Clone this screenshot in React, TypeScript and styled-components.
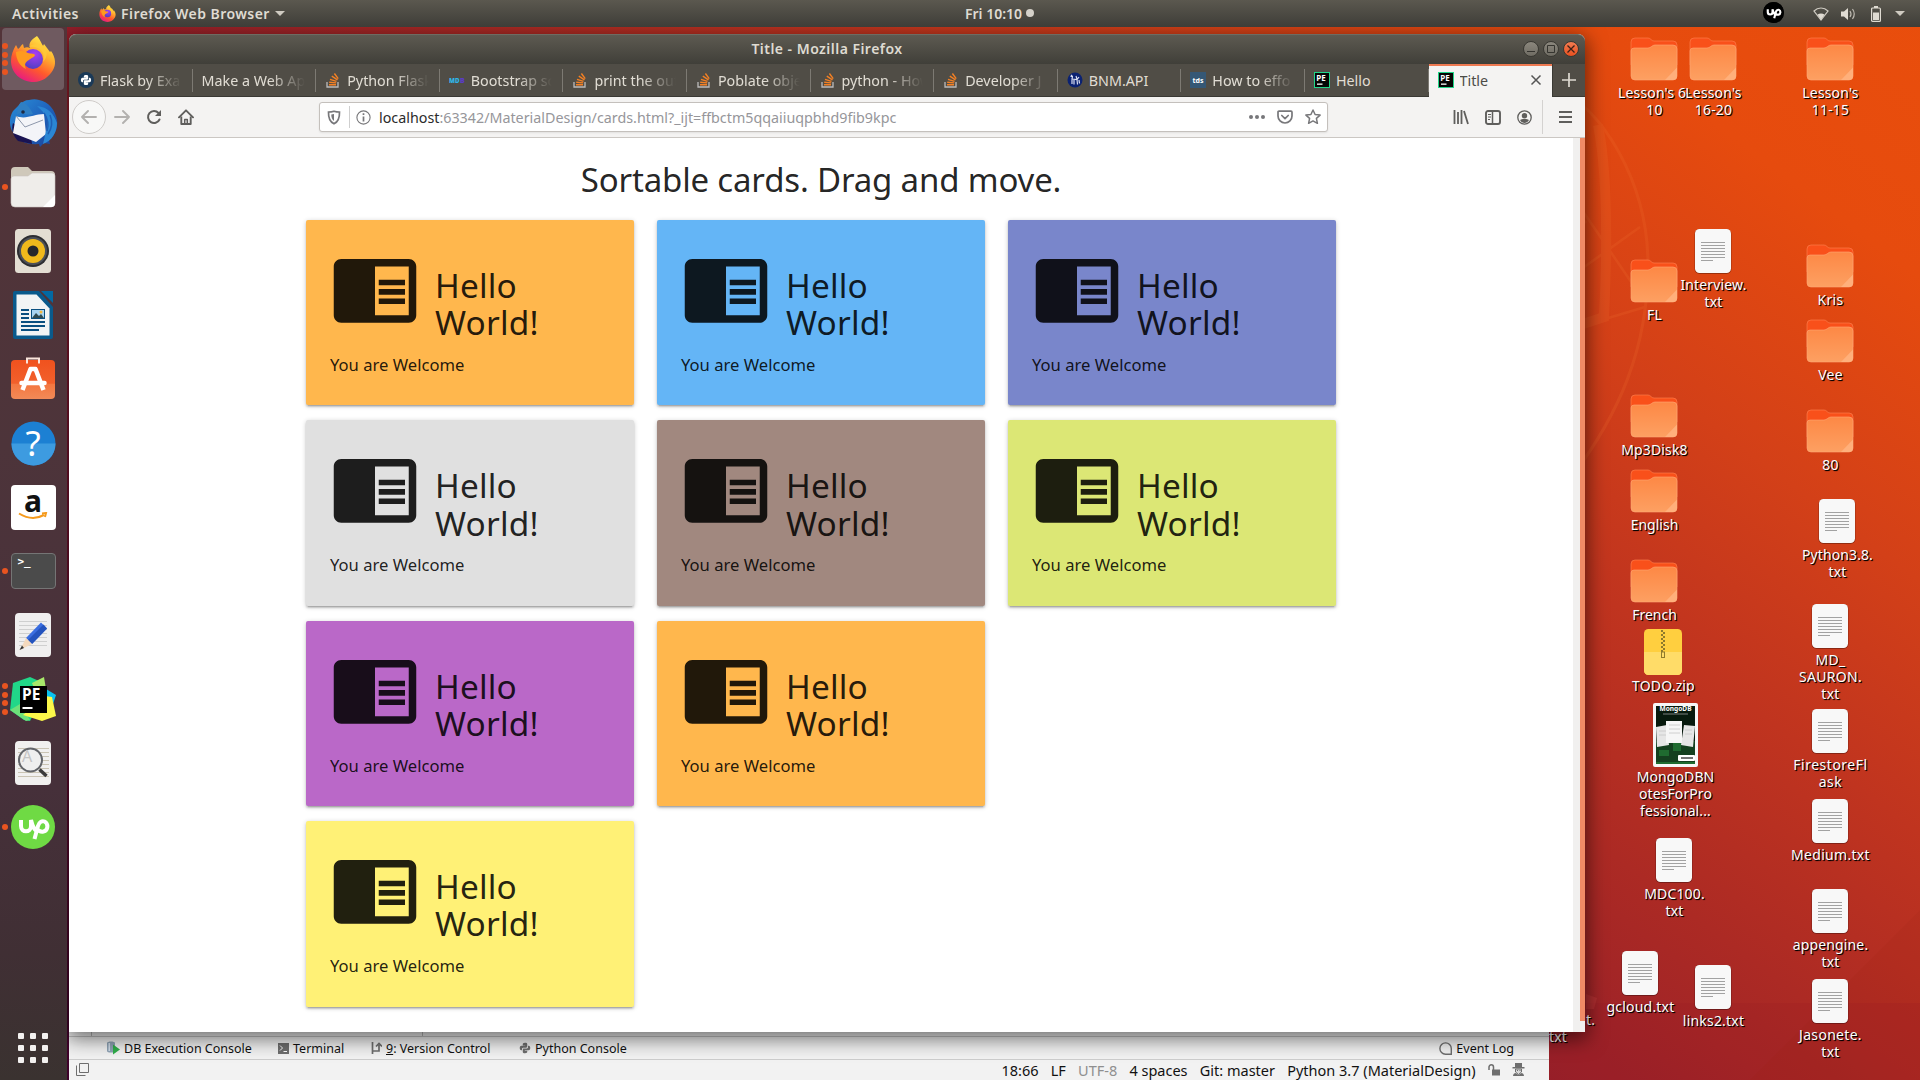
import React from "react";
import styled, { createGlobalStyle, css } from "styled-components";

const Global = createGlobalStyle`
  * { box-sizing: border-box; }
  body { margin: 0; overflow: hidden; background: #a8261f; }
  svg { display: block; flex: none; }
`;

const Screen = styled.div`
  position: relative;
  width: 1920px;
  height: 1080px;
  overflow: hidden;
  display: flex;
  flex-direction: column;
  font-family: "Noto Sans", "Open Sans", sans-serif;
  font-size: 14.3px;
`;

/* ---------- wallpaper and desktop canvas ---------- */

const Canvas = styled.div`
  position: absolute;
  inset: 0;
  overflow: hidden;
  background: linear-gradient(37deg, #38002a 0%, #5c0a2c 14%, #8a1a2c 38%, #982029 46%, #ac2a24 57%, #c0341f 67%, #d34018 77%, #e64b0e 89%, #e94e0c 100%);
`;

const Wallpaper = styled.svg`
  position: absolute;
  inset: 0;
`;

const Item = styled.div<{ $x: number; $y: number; $gap: number }>`
  position: absolute;
  left: ${(p) => p.$x - 60}px;
  top: ${(p) => p.$y}px;
  width: 120px;
  display: flex;
  flex-direction: column;
  align-items: center;
  gap: ${(p) => p.$gap}px;
`;

const ItemLabel = styled.div<{ $ls?: number }>`
  font-size: 14px;
  line-height: 17px;
  letter-spacing: ${(p) => p.$ls ?? 0.15}px;
  color: #fff;
  text-align: center;
  white-space: pre;
  text-shadow: 1px 1px 1px #000, 1px 1px 0 rgba(0, 0, 0, 0.7);
  padding-left: 1px;
`;

const LooseLabel = styled(ItemLabel)<{ $x: number; $y: number }>`
  position: absolute;
  left: ${(p) => p.$x}px;
  top: ${(p) => p.$y}px;
`;

/* ---------- top bar ---------- */

const TopBar = styled.header`
  position: relative;
  z-index: 2;
  height: 27px;
  display: grid;
  grid-template-columns: 953px auto 1fr;
  align-items: center;
  padding: 0 15px 0 12px;
  background: linear-gradient(#5b584f, #3e3d38);
  color: #dfdbd2;
  font-weight: 600;
  font-size: 14px;
`;
const BarSide = styled.div<{ $end?: boolean }>`
  display: flex;
  align-items: center;
  letter-spacing: 0.45px;
  justify-content: ${(p) => (p.$end ? "flex-end" : "flex-start")};
`;
const Activities = styled.span`
  width: 87px;
`;
const AppName = styled.span`
  margin: 0 5px 0 5px;
`;
const Clock = styled.div`
  display: flex;
  align-items: center;
  gap: 4px;
  padding-bottom: 1px;
`;
const NewsDot = styled.i`
  width: 8px;
  height: 8px;
  border-radius: 50%;
  background: #d5d1c9;
`;
const Caret = styled.i`
  border: 5px solid transparent;
  border-top-color: #cfcbc2;
  border-bottom: 0;
`;
const UpTray = styled.span`
  width: 21px;
  height: 21px;
  margin: -2px 29px 0 0;
  border-radius: 50%;
  background: #000;
  display: flex;
  align-items: center;
  justify-content: center;
`;
const TrayIcons = styled.div`
  display: flex;
  align-items: center;
  svg:nth-child(1) { margin-right: 12px; }
  svg:nth-child(2) { margin-right: 14px; }
  svg:nth-child(3) { margin-right: 14px; }
`;

/* ---------- dock ---------- */

const Dock = styled.nav`
  position: relative;
  z-index: 2;
  width: 67px;
  flex: 1;
  display: flex;
  flex-direction: column;
  background: linear-gradient(#533439 0%, #4d343a 40%, #46303a 72%, #402f34 88%, #3a3230 100%);
`;
const DockCell = styled.div<{ $active?: boolean }>`
  position: relative;
  height: 62px;
  width: 62px;
  margin: 1px 2px;
  display: flex;
  align-items: center;
  justify-content: center;
  border-radius: 4px;
  ${(p) => p.$active && css`background: #6f5a60;`}
`;
const RunDots = styled.div`
  position: absolute;
  left: 0;
  top: 0;
  height: 100%;
  display: flex;
  flex-direction: column;
  justify-content: center;
  gap: 2.4px;
  i {
    width: 6px;
    height: 6px;
    border-radius: 50%;
    background: #e95420;
  }
`;
const AppsGrid = styled.div`
  margin: auto 0 17px 18px;
  display: grid;
  grid-template-columns: repeat(3, 6px);
  gap: 6px;
  i {
    height: 6px;
    border-radius: 1px;
    background: #f3f1f0;
  }
`;

/* ---------- browser window ---------- */

const Browser = styled.section`
  position: absolute;
  left: 69px;
  top: 34px;
  width: 1516px;
  height: 998px;
  display: flex;
  flex-direction: column;
  border-radius: 7px 7px 0 0;
  background: #fff;
  box-shadow: 0 5px 20px 2px rgba(0, 0, 0, 0.55);
`;
const TitleBar = styled.div`
  height: 30px;
  display: grid;
  grid-template-columns: 1fr auto 1fr;
  align-items: center;
  padding: 0 6px;
  border-radius: 7px 7px 0 0;
  background: linear-gradient(#5d5a51, #403f39);
  border-top: 1px solid #6e6b62;
  color: #dfdbd2;
  font-weight: 600;
  font-size: 14px;
  letter-spacing: 0.47px;
`;
const TitleText = styled.span`
  grid-column: 2;
  padding-bottom: 2px;
`;
const WindowButtons = styled.div`
  display: flex;
  justify-content: flex-end;
  gap: 4px;
  padding-bottom: 1px;
`;
const WinBtn = styled.i<{ $close?: boolean }>`
  width: 16px;
  height: 16px;
  border-radius: 50%;
  border: 1px solid #393832;
  background: ${(p) => (p.$close ? "linear-gradient(#f27c52, #e9501f)" : "linear-gradient(#8b877d, #6f6c63)")};
  display: flex;
  align-items: center;
  justify-content: center;
`;
const TabStrip = styled.div`
  height: 33px;
  display: flex;
  background: #504d46;
  border-bottom: 1px solid #3a3934;
`;
const Tab = styled.div<{ $active?: boolean }>`
  position: relative;
  width: 123.6px;
  height: ${(p) => (p.$active ? 33 : 32)}px;
  display: flex;
  align-items: center;
  gap: 6px;
  padding: 0 10px 0 9px;
  color: #e1ddd4;
  ${(p) =>
    p.$active
      ? css`
          background: #f4f3f2;
          color: #4c4b47;
          border-top: 2px solid #ee7a52;
          padding-bottom: 3px;
        `
      : css`
          &::after {
            content: "";
            position: absolute;
            right: 0;
            top: 5px;
            height: 23px;
            border-right: 1px solid #7d7a73;
          }
        `}
`;
const TabText = styled.span<{ $fade?: boolean }>`
  flex: 1;
  overflow: hidden;
  white-space: nowrap;
  ${(p) => p.$fade && css`mask-image: linear-gradient(to left, transparent 0, transparent 1px, #000 36px);`}
`;
const NewTab = styled.div`
  flex: 1;
  display: flex;
  align-items: center;
  justify-content: center;
  border-left: 1px solid #3a3934;
`;
const NavBar = styled.div`
  height: 41px;
  display: flex;
  align-items: center;
  background: #f4f3f2;
  border-bottom: 1px solid #cbc7c3;
  padding: 0 13px 0 3px;
`;
const BackCircle = styled.div`
  width: 34px;
  height: 34px;
  border-radius: 50%;
  border: 1px solid #cfccc9;
  background: #f8f8f7;
  display: flex;
  align-items: center;
  justify-content: center;
`;
const NavButtons = styled.div`
  width: 247px;
  display: flex;
  align-items: center;
  svg + svg { margin-left: 16px; }
  div + svg { margin-left: 8px; }
`;
const UrlBar = styled.div`
  width: 1009px;
  height: 30px;
  display: flex;
  align-items: center;
  padding: 0 6px 0 7px;
  background: #fff;
  border: 1px solid #c4c0bc;
  border-radius: 3px;
  box-shadow: 0 1px 2px rgba(0, 0, 0, 0.08);
`;
const UrlDivider = styled.i`
  width: 1px;
  height: 22px;
  margin: 0 6px 0 8px;
  background: #cfcfcf;
`;
const UrlText = styled.span`
  flex: 1;
  margin-left: 8px;
  color: #96969a;
  b { font-weight: 400; color: #2b2b2b; }
`;
const UrlActions = styled.div`
  display: flex;
  align-items: center;
  gap: 12px;
`;
const ToolIcons = styled.div`
  flex: 1;
  height: 34px;
  display: flex;
  align-items: center;
  justify-content: flex-end;
  gap: 16px;
`;
const ToolDivider = styled.i`
  width: 1px;
  height: 34px;
  margin-left: -6px;
  background: #d4d2d0;
`;

const PageArea = styled.div`
  flex: 1;
  display: flex;
  background: #fff;
`;
const Page = styled.main`
  width: 1504px;
  padding: 24px 237px 0;
`;
const Scroll = styled.div`
  flex: 1;
  display: flex;
  justify-content: flex-end;
  background: #f1f0ef;
`;
const Thumb = styled.i`
  width: 5px;
  height: 883px;
  background: #f08b66;
`;
const Heading = styled.h4`
  margin: 0 0 20px;
  height: 38px;
  line-height: 35.4px;
  font-size: 33px;
  letter-spacing: -0.17px;
  font-weight: 400;
  text-align: center;
  color: rgba(0, 0, 0, 0.87);
`;
const Columns = styled.div`
  display: flex;
  gap: 23px;
`;
const Column = styled.div`
  width: 328px;
  display: flex;
  flex-direction: column;
  gap: 15px;
`;
const CardBox = styled.article<{ $bg: string }>`
  height: 185.4px;
  padding: 24px;
  border-radius: 2px;
  background: ${(p) => p.$bg};
  color: rgba(0, 0, 0, 0.87);
  box-shadow: 0 2px 2px 0 rgba(0, 0, 0, 0.14), 0 3px 1px -2px rgba(0, 0, 0, 0.12), 0 1px 5px 0 rgba(0, 0, 0, 0.2);
`;
const CardHead = styled.div`
  display: flex;
  height: 100px;
  margin-bottom: 9px;
`;
const CardTitle = styled.h4`
  margin: 23px 0 0 15px;
  width: 130px;
  font-size: 33.4px;
  line-height: 37.2px;
  letter-spacing: 0.2px;
  font-weight: 400;
`;
const CardText = styled.p`
  margin: 0;
  font-size: 16.6px;
  line-height: 24px;
`;

/* ---------- IDE window behind the browser ---------- */

const Ide = styled.section`
  position: absolute;
  left: 69px;
  top: 1000px;
  width: 1480px;
  height: 80px;
  display: flex;
  flex-direction: column;
  justify-content: flex-end;
  background: #f2f2f2;
  color: #111;
`;
const IdePanels = styled.div`
  height: 4px;
  width: 355px;
  margin-bottom: 0;
  display: grid;
  grid-template-columns: 23px 331px 1px;
  i { border-right: 1px solid #b8b8b8; }
`;
const ToolRow = styled.div`
  height: 23px;
  display: flex;
  align-items: center;
  padding: 0 35px 0 38px;
  border-top: 1px solid #c4c4c4;
  font-size: 12.5px;
`;
const ToolItem = styled.span<{ $w?: number }>`
  display: flex;
  align-items: center;
  gap: 4px;
  white-space: pre;
  ${(p) => (p.$w ? css`width: ${p.$w}px;` : css`margin-left: auto;`)}
`;
const StatusRow = styled.div`
  height: 21px;
  display: flex;
  align-items: center;
  gap: 12.2px;
  padding: 0 24px 1px 7px;
  border-top: 1px solid #cdcdcd;
  font-size: 14.5px;
  line-height: 18px;
  white-space: nowrap;
`;
const Encoding = styled.span`
  color: #8f8f8f;
`;
const Spacer = styled.span`
  flex: 1;
`;

/* ---------- drawings ---------- */

const FirefoxIcon = ({ size, id }: { size: number; id: string }) => (
  <svg width={size} height={size} viewBox="0 0 46 46">
    <defs>
      <linearGradient id={id + "a"} x1="0.8" y1="0" x2="0.25" y2="1">
        <stop offset="0" stopColor="#fff34f" />
        <stop offset="0.35" stopColor="#ffb02e" />
        <stop offset="0.65" stopColor="#ff5a2c" />
        <stop offset="1" stopColor="#e5148a" />
      </linearGradient>
      <radialGradient id={id + "b"} cx="0.6" cy="0.25" r="0.8">
        <stop offset="0" stopColor="#a83df5" />
        <stop offset="1" stopColor="#4b3fc0" />
      </radialGradient>
    </defs>
    <path d="M27 0c3 3 4 7 6 10l1-2c2 3 4 5 6 8l1-1c5 7 5 14 2 19-4 7-11 12-19 12C10 46 1 36 1 25c0-6 2-11 5-16l2 4c2-1 3-4 5-5l1 4c2-1 4-1 6 0-2-5 2-9 7-12z" fill={`url(#${id}a)`} />
    <circle cx="23" cy="23" r="10" fill={`url(#${id}b)`} />
    <path d="M6 16c5-2 9-1 12 1 3 1 6 0 7 2 0 2-4 3-6 5-4 2-5 5-3 9-6-3-10-9-10-17z" fill="#ff9a1f" />
    <path d="M19 11c10-2 17 5 14 15 3-3 5-8 3-13-3-5-11-7-17-2z" fill="#ffcb3a" opacity=".75" />
  </svg>
);

const ThunderbirdIcon = () => (
  <svg width="49" height="48" viewBox="0 0 49 48">
    <defs>
      <linearGradient id="tb" x1="0" y1="0" x2="1" y2="1">
        <stop offset="0" stopColor="#2a8fd8" />
        <stop offset="0.5" stopColor="#1f63bd" />
        <stop offset="1" stopColor="#1b3f94" />
      </linearGradient>
    </defs>
    <path d="M11 5c3-2 5-4 9-4 4-1 7-1 10 0 10 2 16 10 18 20 1 8-2 15-8 20l1 4-6-1-4 4-1-3c-12 1-22-3-26-12C1 30-1 20 4 12z" fill="url(#tb)" />
    <path d="M4 24C2 30 4 37 9 42l14 3-1-8z" fill="#1a1352" />
    <path d="M7 17c10 4 18-2 28-2l2 20-10 8L4 34z" fill="#f3f4f8" />
    <path d="M7 17l9 11 18-7" fill="none" stroke="#8d97ab" strokeWidth="1" />
    <path d="M28 7c8 7 13 14 9 25l-3 13c9-3 14-12 14-21-3-9-9-16-20-17z" fill="#2b86d4" />
    <path d="M35 14c4 6 5 12 3 18M41 16c3 7 2 13-2 19" stroke="#1f5fb4" strokeWidth="1.500" fill="none" />
    <path d="M12 3c6 1 9 6 12 12-7 2-12-3-16 1 0-5 1-10 4-13z" fill="#2f7fc4" />
    <circle cx="14" cy="13" r="1.800" fill="#1d2b44" />
  </svg>
);

const FilesIcon = () => (
  <svg width="46" height="42" viewBox="0 0 46 42">
    <path d="M1 5a4 4 0 0 1 4-4h13l4 4h19a4 4 0 0 1 4 4v10H1z" fill="#cfc8ba" />
    <path d="M1 13a3 3 0 0 1 3-3h14l4-3h20a3 3 0 0 1 3 3v27a4 4 0 0 1-4 4H5a4 4 0 0 1-4-4z" fill="#efedea" stroke="#c9c5bf" strokeWidth=".6" />
    <path d="M45 29v8a4 4 0 0 1-4 4h-8z" fill="#fff" />
  </svg>
);

const MusicIcon = () => (
  <svg width="38" height="46" viewBox="0 0 38 46">
    <rect x="1" y="1" width="36" height="44" rx="3.500" fill="#e3ded3" />
    <circle cx="19" cy="23" r="16" fill="#2c2d31" />
    <circle cx="19" cy="23" r="14" fill="#4c5058" />
    <circle cx="19" cy="23" r="12" fill="#f0b91c" />
    <circle cx="19" cy="23" r="5.500" fill="#26272b" />
  </svg>
);

const WriterIcon = () => (
  <svg width="40" height="48" viewBox="0 0 40 48">
    <path d="M0 2a2 2 0 0 1 2-2h24l14 16v30a2 2 0 0 1-2 2H2a2 2 0 0 1-2-2z" fill="#0a5a8c" />
    <path d="M28 0h12v12z" fill="#0369a3" />
    <path d="M3.500 3.500h20l13 14v27h-33z" fill="#f2f4f5" />
    <path d="M8 18h8v2H8zM8 22h8v2H8zM8 26h8v2H8zM8 30h24v2H8zM8 34h24v2H8zM8 38h18v2H8z" fill="#0a4f80" />
    <rect x="18.500" y="18.500" width="13" height="9" fill="#a8d4f2" stroke="#0a4f80" />
    <path d="M19 27l4-5 3 3 2-2 3 4z" fill="#2f4a50" />
    <circle cx="28" cy="21" r="1.500" fill="#f6b73c" />
  </svg>
);

const SoftwareIcon = () => (
  <svg width="46" height="44" viewBox="0 0 46 44">
    <defs>
      <linearGradient id="sw" x1="0" y1="0" x2="0" y2="1">
        <stop offset="0" stopColor="#f0521e" />
        <stop offset="0.6" stopColor="#f2602c" />
        <stop offset="0.61" stopColor="#f4763f" />
        <stop offset="1" stopColor="#f28a58" />
      </linearGradient>
    </defs>
    <rect x="1" y="3" width="44" height="39" rx="4" fill="url(#sw)" />
    <path d="M17 6.500V1.500h12v5" fill="none" stroke="#fbe6dc" strokeWidth="2" />
    <path d="M12.500 33l8-21h5l8 21" fill="none" stroke="#fff" strokeWidth="4.500" strokeLinejoin="round" />
    <path d="M11.500 26h23" stroke="#fff" strokeWidth="4.500" strokeLinecap="round" />
  </svg>
);

const QuestionGlyph = styled.span`
  position: absolute;
  font-family: "Noto Sans", sans-serif;
  font-size: 35px;
  line-height: 44px;
  color: #fff;
`;

const AmazonTile = styled.div`
  width: 45px;
  height: 45px;
  border-radius: 4px;
  background: #fff;
  display: flex;
  flex-direction: column;
  align-items: center;
  font-weight: 700;
  font-size: 30px;
  line-height: 31px;
  color: #111;
  svg { margin-top: -4px; }
`;

const TerminalTile = styled.div`
  width: 45px;
  height: 36px;
  border-radius: 4px;
  border: 1px solid #757575;
  background: #4b4b4b;
  color: #fff;
  font-family: "DejaVu Sans Mono", monospace;
  font-weight: 700;
  font-size: 11px;
  line-height: 14px;
  padding: 1px 0 0 6px;
`;

const EditorIcon = () => (
  <svg width="38" height="46" viewBox="0 0 38 46">
    <rect x="1" y="1" width="36" height="44" rx="4" fill="#f0efef" />
    <path d="M5 9.500h28M5 13.500h28M5 17.500h28M5 21.500h28M5 25.500h28M5 29.500h28M5 33.500h28" stroke="#cfcfcf" />
    <path d="M12 26L27 10.500l6 6L18 32z" fill="#3a6de0" />
    <path d="M14 28l15.500-15.500 3.500 4L18 32z" fill="#2453bd" />
    <path d="M12 26l6 6-12 6z" fill="#f4d9bd" />
    <path d="M8 33.500L10 36l-4.500 2z" fill="#333" />
  </svg>
);

const PyCharmIcon = () => (
  <svg width="46" height="44" viewBox="0 0 46 44">
    <path d="M3 6L20 0l9 4 5 12-14 28-6-1L0 33z" fill="#21d789" />
    <path d="M0 33l10-6 10 16-4 1z" fill="#6ee07a" />
    <path d="M22 6l12-6 2 12-10 4z" fill="#a8e86a" />
    <path d="M36 12l10 6-4 12-9-6z" fill="#07c3f2" />
    <path d="M13 38l22-19 7 1 4 19-14 5z" fill="#fcf84a" />
    <rect x="10" y="9" width="27" height="27" fill="#000" />
    <text x="12" y="23" fontFamily="Noto Sans" fontWeight="700" fontSize="15.500" fill="#fff">PE</text>
    <rect x="12.500" y="30" width="10" height="2" fill="#fff" />
  </svg>
);

const ViewerIcon = () => (
  <svg width="38" height="46" viewBox="0 0 38 46">
    <rect x="1" y="1" width="36" height="44" rx="4" fill="#f1f0ef" />
    <path d="M4 8.500h31M4 12.500h31M4 16.500h31M4 20.500h31M4 24.500h31M4 28.500h31M4 32.500h31M4 36.500h31" stroke="#cac4b4" />
    <circle cx="16.500" cy="20" r="11.500" fill="#efefef" stroke="#63656a" strokeWidth="2" />
    <text x="8" y="22" fontFamily="Noto Sans" fontSize="16" fill="#c4c4c4">A</text>
    <path d="M25.500 29.500l7 6.500" stroke="#3b3b3b" strokeWidth="3.500" />
  </svg>
);

const UpMark = ({ size, bg, sw }: { size: number; bg: string; sw: number }) => (
  <svg width={size} height={size} viewBox="0 0 44 44">
    <circle cx="22" cy="22" r="22" fill={bg} />
    <path d="M10 15v6c0 7 10 7 10 0v-6c2 8 4 11 7 12M23.500 34l3.500-13c1-4 4-5.500 6.500-4.500 4 2 4 9-1 10-3 .6-5-.5-7-3" fill="none" stroke="#fff" strokeWidth={sw} />
  </svg>
);

const Folder = () => (
  <svg width="48" height="44" viewBox="0 0 48 44">
    <defs>
      <linearGradient id="fold" x1="0" y1="0" x2="0" y2="1">
        <stop offset="0" stopColor="#fd8845" />
        <stop offset="1" stopColor="#fda062" />
      </linearGradient>
    </defs>
    <path d="M1 5a4 4 0 0 1 4-4h13c3 0 3 3 6 3h19a4 4 0 0 1 4 4v20H1z" fill="#f9501a" stroke="#ff8352" strokeWidth=".6" />
    <path d="M1 14a3 3 0 0 1 3-3h14c3 0 4-3 7-3h18a4 4 0 0 1 4 4v27a4 4 0 0 1-4 4H5a4 4 0 0 1-4-4z" fill="url(#fold)" stroke="#ffa877" strokeWidth=".6" />
    <path d="M47 30.500V39a4 4 0 0 1-4 4h-8z" fill="#ffb888" opacity=".7" />
  </svg>
);

const TextFile = () => (
  <svg width="38" height="46" viewBox="0 0 38 46">
    <rect x=".5" y="1" width="37" height="45" rx="5" fill="#000" opacity=".3" />
    <rect x="1" y="1" width="36" height="44" rx="4.500" fill="#f8f8f8" />
    <path d="M7 14.500h24M7 17.500h24M7 20.500h24M7 23.500h24M7 26.500h24M7 29.500h24M7 32.500h12" stroke="#a2a2a2" />
  </svg>
);

const ZipFile = () => (
  <svg width="38" height="46" viewBox="0 0 38 46">
    <rect width="38" height="46" rx="4.500" fill="#ffcf3f" />
    <path d="M0 23h38v18.500a4.500 4.500 0 0 1-4.500 4.500h-29A4.500 4.500 0 0 1 0 41.500z" fill="#ffdc68" />
    <path d="M18 1v22" stroke="#8f7a2c" strokeWidth="2" strokeDasharray="2 2" />
    <path d="M20 3v20" stroke="#8f7a2c" strokeWidth="2" strokeDasharray="2 2" />
    <rect x="17.500" y="23" width="3" height="5.500" fill="none" stroke="#8f7a2c" />
  </svg>
);

const BookCover = () => (
  <svg width="45" height="64" viewBox="0 0 45 64">
    <rect width="45" height="64" rx="2" fill="#f7f7f7" />
    <rect x="3" y="3" width="39" height="58" fill="#081a0e" />
    <path d="M3 38h39v23H3z" fill="#14401f" />
    <path d="M20 40h8v8h-8zM3 59h39v2H3zM6 47h10v6H6z" fill="#1f6b30" />
    <text x="22.500" y="8.200" textAnchor="middle" fontFamily="Noto Sans" fontWeight="700" fontSize="7" textLength="32" lengthAdjust="spacingAndGlyphs" fill="#fff">MongoDB</text>
    <path d="M10 11h25" stroke="#999" strokeWidth=".8" />
    <path d="M3 24l11-2 2 20-12 2zM31 22l11 1-2 21-12-2z" fill="#e6e6e6" />
    <rect x="13" y="18" width="16" height="22" fill="#f6f6f6" />
    <path d="M16 22h11M16 26h11M16 30h11M6 28h7M6 32h7M32 27h7M32 31h7" stroke="#c6c6c6" strokeWidth=".8" />
    <rect x="25" y="52" width="17" height="6" rx="1" fill="#fff" />
    <path d="M28 55h12" stroke="#444" strokeWidth="1.500" />
  </svg>
);

const StackIcon = () => (
  <svg width="16" height="16" viewBox="0 0 16 16" fill="none">
    <path d="M2 10v5h11v-5" stroke="#bcbbbb" strokeWidth="1.300" />
    <path d="M4 12.800h7M4.200 10.200l7 .7M5 7.300l6.500 2M6.800 4.200l5.700 3.700M9.400 1.500l3.800 5.200" stroke="#f48024" strokeWidth="1.400" />
  </svg>
);
const PythonIcon = ({ size, color }: { size: number; color: string }) => (
  <svg width={size} height={size} viewBox="0 0 16 16" fill={color}>
    <path d="M8 1C5.500 1 5 2 5 3v1.500h3.200V5H3C1.500 5 1 6.500 1 8s.5 3 2 3h1V9.500C4 8 5 7.500 6.500 7.500h3c1 0 1.500-.6 1.500-1.500V3c0-1.400-1-2-3-2z" />
    <path d="M8 15c2.500 0 3-1 3-2v-1.500H7.800V11H13c1.500 0 2-1.500 2-3s-.5-3-2-3h-1v1.500c0 1.500-1 2-2.500 2h-3C5.500 8.500 5 9.100 5 10v3c0 1.400 1 2 3 2z" />
  </svg>
);
const RealPython = () => (
  <svg width="16" height="16" viewBox="0 0 16 16">
    <circle cx="8" cy="8" r="8" fill="#1b3a58" />
    <g transform="translate(2.200 2.200) scale(.725)" fill="#fff">
      <path d="M8 1C5.500 1 5 2 5 3v1.500h3.200V5H3C1.500 5 1 6.500 1 8s.5 3 2 3h1V9.500C4 8 5 7.500 6.500 7.500h3c1 0 1.500-.6 1.500-1.500V3c0-1.400-1-2-3-2z" />
      <path d="M8 15c2.500 0 3-1 3-2v-1.500H7.800V11H13c1.500 0 2-1.500 2-3s-.5-3-2-3h-1v1.500c0 1.500-1 2-2.500 2h-3C5.500 8.500 5 9.100 5 10v3c0 1.400 1 2 3 2z" />
    </g>
  </svg>
);
const MdbIcon = () => (
  <svg width="16" height="16" viewBox="0 0 16 16" fontFamily="Noto Sans" fontWeight="900" fontSize="7">
    <text x="0" y="10.500" textLength="10.500" lengthAdjust="spacingAndGlyphs" fill="#2fb5ea">MD</text>
    <text x="11" y="10.500" textLength="4.800" lengthAdjust="spacingAndGlyphs" fill="#5b3cc4">B</text>
  </svg>
);
const BnmIcon = () => (
  <svg width="16" height="16" viewBox="0 0 16 16">
    <circle cx="8" cy="8" r="7.500" fill="#0b2272" />
    <path d="M4 3l1.500 1.500L5 7l5 .5L12 5M5 7v5M7 8v4.500M10 7.500l.5 5M12 8l.5 3.500M9 4l1 3M3.500 4.500H6" stroke="#d8def2" strokeWidth="1.200" fill="none" />
  </svg>
);
const TdsIcon = () => (
  <svg width="16" height="16" viewBox="0 0 16 16">
    <rect width="16" height="16" fill="#355876" />
    <text x="8" y="10.500" textAnchor="middle" fontFamily="Noto Sans" fontWeight="700" fontSize="7" fill="#fff">tds</text>
  </svg>
);
const PeIcon = () => (
  <svg width="16" height="16" viewBox="0 0 16 16">
    <rect x=".5" y=".5" width="15" height="15" fill="#050505" stroke="#21d789" />
    <text x="2.300" y="8.800" fontFamily="Noto Sans" fontWeight="700" fontSize="8" fill="#fff">PE</text>
    <rect x="3" y="11.500" width="5.500" height="1.300" fill="#fff" />
  </svg>
);

const Arrow = ({ flip, color }: { flip?: boolean; color: string }) => (
  <svg width="16" height="16" viewBox="0 0 16 16" fill="none" stroke={color} strokeWidth="1.900" strokeLinecap="round" strokeLinejoin="round">
    {flip ? <path d="M1 8h14M9 2l6 6-6 6" /> : <path d="M15 8H1M7 2L1 8l6 6" />}
  </svg>
);

const favicons: Record<string, React.ReactNode> = {
  rp: <RealPython />,
  so: <StackIcon />,
  mdb: <MdbIcon />,
  bnm: <BnmIcon />,
  tds: <TdsIcon />,
  pe: <PeIcon />,
};

/* ---------- data ---------- */

const tabs = [
  { icon: "rp", text: "Flask by Exa", fade: true },
  { icon: "", text: "Make a Web Ap", fade: true },
  { icon: "so", text: "Python Flask", fade: true },
  { icon: "mdb", text: "Bootstrap sc", fade: true },
  { icon: "so", text: "print the out", fade: true },
  { icon: "so", text: "Poblate obje", fade: true },
  { icon: "so", text: "python - How", fade: true },
  { icon: "so", text: "Developer J", fade: true },
  { icon: "bnm", text: "BNM.API" },
  { icon: "tds", text: "How to effo", fade: true },
  { icon: "pe", text: "Hello" },
];

const columns = [
  ["#ffb74d", "#e0e0e0", "#ba68c8", "#fff176"],
  ["#64b5f6", "#a1887f", "#ffb74d"],
  ["#7986cb", "#dce775"],
];

type Kind = "folder" | "text" | "zip" | "book";
const kinds: Record<Kind, { node: React.ReactNode; gap: number; lift: number }> = {
  folder: { node: <Folder />, gap: 3, lift: 1 },
  text: { node: <TextFile />, gap: 2, lift: 1 },
  zip: { node: <ZipFile />, gap: 2, lift: 0 },
  book: { node: <BookCover />, gap: 1, lift: 0 },
};

const desktop: { k: Kind; x: number; y: number; t: string; ls?: number }[] = [
  { k: "folder", x: 1654, y: 38, t: "Lesson's 6-\n10" },
  { k: "folder", x: 1713, y: 38, t: "Lesson's\n16-20" },
  { k: "folder", x: 1830, y: 38, t: "Lesson's\n11-15" },
  { k: "folder", x: 1654, y: 260, t: "FL" },
  { k: "text", x: 1713, y: 229, t: "Interview.\ntxt" },
  { k: "folder", x: 1830, y: 245, t: "Kris", ls: 0.3 },
  { k: "folder", x: 1830, y: 320, t: "Vee" },
  { k: "folder", x: 1654, y: 395, t: "Mp3Disk8" },
  { k: "folder", x: 1830, y: 410, t: "80" },
  { k: "folder", x: 1654, y: 470, t: "English", ls: 0 },
  { k: "text", x: 1837, y: 499, t: "Python3.8.\ntxt", ls: 0.1 },
  { k: "folder", x: 1654, y: 560, t: "French", ls: 0 },
  { k: "zip", x: 1663, y: 629, t: "TODO.zip" },
  { k: "text", x: 1830, y: 604, t: "MD_\nSAURON.\ntxt", ls: 0.3 },
  { k: "book", x: 1675, y: 703, t: "MongoDBN\notesForPro\nfessional...", ls: 0.1 },
  { k: "text", x: 1830, y: 709, t: "FirestoreFl\nask", ls: 0.5 },
  { k: "text", x: 1830, y: 799, t: "Medium.txt", ls: 0.3 },
  { k: "text", x: 1674, y: 838, t: "MDC100.\ntxt" },
  { k: "text", x: 1830, y: 889, t: "appengine.\ntxt" },
  { k: "text", x: 1640, y: 951, t: "gcloud.txt", ls: 0.2 },
  { k: "text", x: 1713, y: 965, t: "links2.txt", ls: 0.2 },
  { k: "text", x: 1830, y: 979, t: "Jasonete.\ntxt", ls: 0.3 },
];

const Dots = ({ n }: { n: number }) => (
  <RunDots>
    {Array.from({ length: n }, (_, i) => (
      <i key={i} />
    ))}
  </RunDots>
);

const Card = ({ color }: { color: string }) => (
  <CardBox $bg={color}>
    <CardHead>
      <svg width="90" height="90" viewBox="0 0 24 24" fill="#000" fillOpacity=".87">
        <path d="M13 12h7v1.500h-7zm0-2.500h7V11h-7zm0 5h7V16h-7zM21 4H3c-1.100 0-2 .9-2 2v13c0 1.100.9 2 2 2h18c1.100 0 2-.9 2-2V6c0-1.100-.9-2-2-2zm0 15h-9V6h9v13z" />
      </svg>
      <CardTitle>Hello World!</CardTitle>
    </CardHead>
    <CardText>You are Welcome</CardText>
  </CardBox>
);

export default function App() {
  return (
    <Screen>
      <Global />
      <Canvas>
        <Wallpaper width="1920" height="1080" viewBox="0 0 1920 1080" fill="none">
          <path d="M1920 910L1750 1080h170z" fill="#a02010" opacity=".12" />
          <path d="M1500 1003h420v77h-420z" fill="#8a1420" opacity=".12" />
          <path d="M1586 994l11 4-3 11h-8z" fill="#c43c3c" opacity=".4" />
          <g stroke="#f07030" opacity=".2">
            <path d="M1560 90c40 18 88 90 88 175s-30 150-75 210" strokeWidth="3" />
            <path d="M1580 207l58 85M1580 270l60-43M1585 325l60-18M1580 215l6 8" strokeWidth="2.500" />
            <path d="M1598 125c8 40 10 110 6 192l-24 8" strokeWidth="10" />
          </g>
        </Wallpaper>
        {desktop.map((d) => (
          <Item key={d.t} $x={d.x} $y={d.y - kinds[d.k].lift} $gap={kinds[d.k].gap}>
            {kinds[d.k].node}
            <ItemLabel $ls={d.ls}>{d.t}</ItemLabel>
          </Item>
        ))}
        <LooseLabel $x={1585} $y={1011}>t.</LooseLabel>
        <LooseLabel $x={1548} $y={1028}>txt</LooseLabel>

        <Ide>
          <IdePanels><i /><i /></IdePanels>
          <ToolRow>
            <ToolItem $w={171}>
              <svg width="13" height="14" viewBox="0 0 13 14">
                <path d="M0 2c0-2 8-2 8 0v8c0 2-8 2-8 0z" fill="#8fa3b5" />
                <path d="M1.500 2h1.500v8H1.500z" fill="#d2deea" />
                <path d="M6 3.500l7 5-7 5z" fill="#2fae4a" />
              </svg>
              DB Execution Console
            </ToolItem>
            <ToolItem $w={93}>
              <svg width="11" height="11" viewBox="0 0 11 11">
                <rect width="11" height="11" fill="#6e6e6e" />
                <path d="M2 2.500L4.500 5 2 7.500M5.500 8.500H9" stroke="#fff" fill="none" />
              </svg>
              Terminal
            </ToolItem>
            <ToolItem $w={148}>
              <svg width="11" height="12" viewBox="0 0 11 12" fill="none" stroke="#6e6e6e" strokeWidth="1.700">
                <path d="M1.500 0v12M1.500 9H8V3M5 4.500L8 1.500l3 3" />
              </svg>
              <span><u>9</u>: Version Control</span>
            </ToolItem>
            <ToolItem $w={120}>
              <PythonIcon size={12} color="#6e6e6e" />
              Python Console
            </ToolItem>
            <ToolItem>
              <svg width="13" height="13" viewBox="0 0 13 13" fill="none" stroke="#6e6e6e" strokeWidth="1.400">
                <path d="M12.300 12.300H6.500a5.700 5.700 0 1 1 5.800-5.800z" />
              </svg>
              Event Log
            </ToolItem>
          </ToolRow>
          <StatusRow>
            <svg width="13" height="13" viewBox="0 0 13 13" fill="none" stroke="#6e6e6e">
              <path d="M3.500.5h9v9h-9zM.5 2.500v10h9" />
            </svg>
            <Spacer />
            <span>18:66</span>
            <span>LF</span>
            <Encoding>UTF-8</Encoding>
            <span>4 spaces</span>
            <span>Git: master</span>
            <span>Python 3.7 (MaterialDesign)</span>
            <svg width="12" height="12" viewBox="0 0 12 12">
              <path d="M1 6V3a2 2 0 0 1 4.500 0v3" fill="none" stroke="#6e6e6e" strokeWidth="1.500" />
              <rect x="4" y="5.500" width="8" height="6" fill="#6e6e6e" />
            </svg>
            <svg width="13" height="13" viewBox="0 0 13 13" fill="#6e6e6e">
              <path d="M3 0h7v4h2.500v1.500H.5V4H3z" />
              <path d="M3.500 6h6v3l-3 2.500-3-2.500z" fill="#d8d8d8" stroke="#6e6e6e" />
              <path d="M5 7.500h1M7.500 7.500h1" stroke="#6e6e6e" />
              <path d="M1 13c0-2 1.500-3 2.500-3l3 2 3-2c1 0 2.500 1 2.500 3z" />
            </svg>
          </StatusRow>
        </Ide>

        <Browser>
          <TitleBar>
            <TitleText>Title - Mozilla Firefox</TitleText>
            <WindowButtons>
              <WinBtn><svg width="8" height="8"><path d="M0 6.500h8" stroke="#35342f" /></svg></WinBtn>
              <WinBtn><svg width="8" height="8"><path d="M.5.500h7v7h-7z" fill="none" stroke="#35342f" /></svg></WinBtn>
              <WinBtn $close><svg width="8" height="8"><path d="M.5.500l7 7M7.500.500l-7 7" stroke="#3c2018" strokeWidth="1.300" /></svg></WinBtn>
            </WindowButtons>
          </TitleBar>
          <TabStrip>
            {tabs.map((t) => (
              <Tab key={t.text}>
                {favicons[t.icon]}
                <TabText $fade={t.fade}>{t.text}</TabText>
              </Tab>
            ))}
            <Tab $active>
              <PeIcon />
              <TabText>Title</TabText>
              <svg width="12" height="12" viewBox="0 0 12 12"><path d="M1.500 1.500l9 9M10.500 1.500l-9 9" stroke="#555" strokeWidth="1.500" /></svg>
            </Tab>
            <NewTab>
              <svg width="14" height="14" viewBox="0 0 14 14"><path d="M7 0v14M0 7h14" stroke="#dedad2" strokeWidth="1.700" /></svg>
            </NewTab>
          </TabStrip>
          <NavBar>
            <NavButtons>
              <BackCircle><Arrow color="#b3b1af" /></BackCircle>
              <Arrow flip color="#b3b1af" />
              <svg width="16" height="16" viewBox="0 0 16 16" fill="none" stroke="#5f5e5c" strokeWidth="2">
                <path d="M13.500 10.500A6 6 0 1 1 12.500 4" strokeLinecap="round" />
                <path d="M15 1v6H9z" fill="#5f5e5c" stroke="none" />
              </svg>
              <svg width="16" height="16" viewBox="0 0 16 16" fill="none" stroke="#5f5e5c" strokeWidth="1.900" strokeLinejoin="round">
                <path d="M1 8.300L8 1.300l7 7" strokeLinecap="round" />
                <path d="M3.300 7.500V15h9.400V7.500" />
                <path d="M6.700 15v-4.500h2.600V15" strokeWidth="1.500" />
              </svg>
            </NavButtons>
            <UrlBar>
              <svg width="14" height="15" viewBox="0 0 14 15" fill="none" stroke="#77777a" strokeWidth="1.700">
                <path d="M7 1.200c2 .6 4 .8 5.500.8C12.700 8 11 12 7 13.800 3 12 1.300 8 1.500 2 3 2 5 1.800 7 1.200z" />
                <path d="M7 4v7c-2-1.500-2.800-4-2.700-6.500z" fill="#77777a" stroke="none" />
              </svg>
              <UrlDivider />
              <svg width="15" height="15" viewBox="0 0 15 15" fill="none" stroke="#77777a" strokeWidth="1.100">
                <circle cx="7.500" cy="7.500" r="6.600" />
                <path d="M7.500 6.500v5M7.500 3.300v1.800" strokeWidth="1.700" />
              </svg>
              <UrlText><b>localhost</b>:63342/MaterialDesign/cards.html?_ijt=ffbctm5qqaiiuqpbhd9fib9kpc</UrlText>
              <UrlActions>
                <svg width="16" height="4" fill="#77777a"><circle cx="2" cy="2" r="2" /><circle cx="8" cy="2" r="2" /><circle cx="14" cy="2" r="2" /></svg>
                <svg width="16" height="15" viewBox="0 0 16 15" fill="none" stroke="#77777a" strokeWidth="1.700" strokeLinecap="round" strokeLinejoin="round">
                  <path d="M2 1.200h12q1 0 1 1V6a7 7 0 0 1-14 0V2.200q0-1 1-1z" /><path d="M4.800 5.500L8 8.700l3.200-3.200" />
                </svg>
                <svg width="16" height="16" viewBox="0 0 16 16" fill="none" stroke="#77777a" strokeWidth="1.500" strokeLinejoin="round">
                  <path d="M8 1l2.100 4.500 5 .6-3.700 3.300 1 4.900L8 11.900l-4.400 2.400 1-4.900L.9 6.100l5-.6z" />
                </svg>
              </UrlActions>
            </UrlBar>
            <ToolIcons>
              <svg width="16" height="16" viewBox="0 0 16 16" stroke="#5f5e5c" strokeWidth="1.800"><path d="M1.500 1v14M5 3v12M8.500 1v14M11 2l4 13" /></svg>
              <svg width="16" height="15" viewBox="0 0 16 15" fill="none" stroke="#5f5e5c">
                <rect x="1" y="1" width="14" height="13" rx="2" strokeWidth="1.900" /><path d="M7.500 1v13" strokeWidth="1.500" /><path d="M3 4.500h3M3 7h3M3 9.500h2" />
              </svg>
              <svg width="15" height="15" viewBox="0 0 15 15">
                <circle cx="7.500" cy="7.500" r="6.700" fill="none" stroke="#5f5e5c" strokeWidth="1.300" />
                <circle cx="7.500" cy="5.700" r="2.700" fill="#5f5e5c" /><path d="M3 10c1-1.500 8-1.500 9 0-1 2-3 3-4.500 3S4 12 3 10z" fill="#5f5e5c" />
              </svg>
              <ToolDivider />
              <svg width="13" height="12" viewBox="0 0 13 12" stroke="#5f5e5c" strokeWidth="1.800"><path d="M0 1h13M0 6h13M0 11h13" /></svg>
            </ToolIcons>
          </NavBar>
          <PageArea>
            <Page>
              <Heading>Sortable cards. Drag and move.</Heading>
              <Columns>
                {columns.map((c, i) => (
                  <Column key={i}>
                    {c.map((color) => (
                      <Card key={color} color={color} />
                    ))}
                  </Column>
                ))}
              </Columns>
            </Page>
            <Scroll><Thumb /></Scroll>
          </PageArea>
        </Browser>
      </Canvas>

      <TopBar>
        <BarSide>
          <Activities>Activities</Activities>
          <FirefoxIcon size={17} id="ffs" />
          <AppName>Firefox Web Browser</AppName>
          <Caret />
        </BarSide>
        <Clock>Fri 10:10<NewsDot /></Clock>
        <BarSide $end>
          <UpTray><UpMark size={21} bg="#000" sw={4.5} /></UpTray>
          <TrayIcons>
            <svg width="16" height="14" viewBox="0 0 16 14">
              <path d="M1 4c4-4 10-4 14 0L8 13z" fill="none" stroke="#cfcbc2" strokeWidth="1.200" />
              <path d="M4.500 7.500c2-1.500 5-1.500 7 0L8 13z" fill="#dfdbd2" />
            </svg>
            <svg width="16" height="14" viewBox="0 0 16 14">
              <path d="M0 4.500h3L7 1v12L3 9.500H0z" fill="#dfdbd2" />
              <path d="M9 4q2 3 0 6M11.500 2q3.500 5 0 10" fill="none" stroke="#bdb9b0" strokeWidth="1.200" />
            </svg>
            <svg width="10" height="16" viewBox="0 0 10 16">
              <path d="M3 0h4v2H3z" fill="#dfdbd2" /><rect x=".6" y="2" width="8.800" height="13.400" rx="1" fill="none" stroke="#dfdbd2" strokeWidth="1.200" />
              <rect x="2" y="6.500" width="6" height="7.500" fill="#dfdbd2" />
            </svg>
            <Caret />
          </TrayIcons>
        </BarSide>
      </TopBar>

      <Dock>
        <DockCell $active><Dots n={4} /><FirefoxIcon size={46} id="ffl" /></DockCell>
        <DockCell><ThunderbirdIcon /></DockCell>
        <DockCell><Dots n={1} /><FilesIcon /></DockCell>
        <DockCell><MusicIcon /></DockCell>
        <DockCell><WriterIcon /></DockCell>
        <DockCell><SoftwareIcon /></DockCell>
        <DockCell>
          <svg width="45" height="45" viewBox="0 0 45 45"><circle cx="22.500" cy="22.500" r="22" fill="#1c80d3" /><path d="M.5 22.500a22 22 0 0 0 44 0z" fill="#3d9be0" /></svg>
          <QuestionGlyph>?</QuestionGlyph>
        </DockCell>
        <DockCell>
          <AmazonTile>
            a
            <svg width="30" height="8" viewBox="0 0 30 8" fill="none" stroke="#f59a1c" strokeWidth="2"><path d="M1 1.500q13 8 25 1.500M24 1.500l4-.5-1 4" /></svg>
          </AmazonTile>
        </DockCell>
        <DockCell><Dots n={1} /><TerminalTile>&gt;_</TerminalTile></DockCell>
        <DockCell><EditorIcon /></DockCell>
        <DockCell><Dots n={4} /><PyCharmIcon /></DockCell>
        <DockCell><ViewerIcon /></DockCell>
        <DockCell><Dots n={1} /><UpMark size={44} bg="#6fda44" sw={4} /></DockCell>
        <AppsGrid>{Array.from({ length: 9 }, (_, i) => <i key={i} />)}</AppsGrid>
      </Dock>
    </Screen>
  );
}
